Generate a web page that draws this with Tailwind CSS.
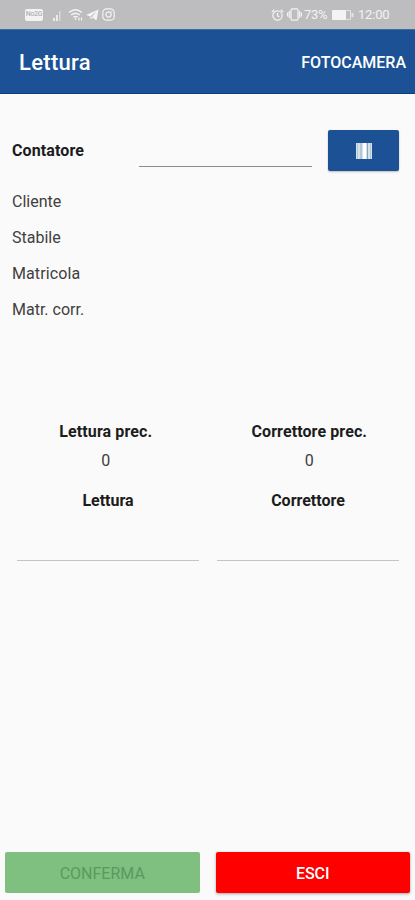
<!DOCTYPE html>
<html lang="it">
<head>
    <meta charset="UTF-8">
    <meta name="viewport" content="width=device-width, initial-scale=1.0">
    <script src="https://cdn.jsdelivr.net/npm/@tailwindcss/browser@4"></script>
    <title>Lettura</title>
</head>
<body class="bg-[#fafafa] font-['Roboto',sans-serif] text-base text-[#404040]">
    <div class="flex h-[900px] w-[415px] flex-col overflow-hidden">
        <!-- Status bar -->
        <div class="flex h-[29px] shrink-0 items-center justify-between bg-[#bdbdbf] px-[25px] text-[#f3f3f3]">
            <div class="flex items-center">
                <span class="flex h-[12px] w-[18px] items-center justify-center rounded-[2px] bg-[#f3f3f3] text-[7px] font-medium tracking-tighter text-[#b0b0b2]">No2G</span>
                <svg class="ml-[9px] h-[12px] w-[10px]" viewBox="0 0 10 12" fill="currentColor">
                    <path d="M1 9h2v3H1zM4 6h2v6H4z" opacity=".85"/>
                    <path d="M7 2h1.5v10H7z" opacity=".5"/>
                </svg>
                <svg class="ml-[6px] h-[13px] w-[16px]" viewBox="0 0 16 13" fill="none" stroke="currentColor" stroke-width="1.4">
                    <path d="M1 4.5Q7.5-1 14 4.5M3.2 7Q7.5 3.4 11.8 7M5.4 9.3Q7.5 7.5 9.6 9.3"/>
                    <path d="M7.5 10v2M11 9.5v3M13.5 9.5v3" stroke-width="1.2"/>
                </svg>
                <svg class="ml-[2px] h-[12px] w-[13px]" viewBox="0 0 13 12" fill="currentColor">
                    <path d="M0 6 12.5.5 10.5 11.5 6.5 8.5 4.8 10.5 4.2 7.5z"/>
                    <path d="M4.3 7.5 10.5 2.5 5.8 8.2z" fill="#bdbdbf"/>
                </svg>
                <svg class="ml-[3px] h-[13px] w-[13px]" viewBox="0 0 13 13" fill="none" stroke="currentColor" stroke-width="1.2">
                    <rect x=".8" y=".8" width="11.4" height="11.4" rx="3.8"/>
                    <circle cx="6.5" cy="6.5" r="2.6"/>
                    <path d="M9.2 3.5h1"/>
                </svg>
            </div>
            <div class="flex items-center text-[13px] leading-none">
                <svg class="h-[12px] w-[13px]" viewBox="0 0 13 12" fill="none" stroke="currentColor" stroke-width="1.2">
                    <circle cx="6.5" cy="6.5" r="4.6"/>
                    <path d="M6.5 4v2.8l2 1M.8 3 3.3.8M12.2 3 9.7.8"/>
                </svg>
                <svg class="ml-[3px] h-[13px] w-[15px]" viewBox="0 0 15 13" fill="none" stroke="currentColor" stroke-width="1.2">
                    <rect x="4" y=".8" width="7" height="11.4" rx="1.2"/>
                    <path d="M2.3 3v7M.6 4.5v4M12.7 3v7M14.4 4.5v4"/>
                </svg>
                <span class="ml-[2px] w-[25px] tracking-[-0.3px]">73%</span>
                <svg class="ml-[3px] h-[10px] w-[22px]" viewBox="0 0 22 10" fill="currentColor">
                    <rect x="0" y="0" width="14" height="10" rx="1"/>
                    <path d="M14 .6h4.5v8.8H14" fill="none" stroke="currentColor" opacity=".7"/>
                    <path d="M19.5 3h2v4h-2z" opacity=".7"/>
                </svg>
                <span class="ml-[4px] w-[32px] tracking-[-0.2px]">12:00</span>
            </div>
        </div>

        <!-- App bar -->
        <header class="flex h-[65px] shrink-0 items-center justify-between border-t border-b border-t-[#3a6c9c] border-b-[#0d3f80] bg-[#1c5295] pt-[2px] pr-[9px] pl-[19px] text-white">
            <h1 class="text-[22px] font-medium tracking-[0.3px]">Lettura</h1>
            <button class="text-[16px] font-medium">FOTOCAMERA</button>
        </header>

        <!-- Meter details -->
        <section class="px-3 pt-9">
            <div class="flex h-[41px] items-center">
                <label for="contatore" class="w-[127px] pt-px font-bold tracking-[0.1px] text-[#1c1c1c]">Contatore</label>
                <input id="contatore" class="h-[33px] w-[173px] border-b border-[#8c8c8c] outline-none">
                <button class="ml-4 flex h-[41px] w-[71px] items-center justify-center rounded-[2px] bg-[#1c5295] shadow-[0_1px_2px_rgba(0,0,0,0.25)]">
                    <svg class="h-4 w-4" viewBox="0 0 16 16">
                        <path fill="#d5e2ea" d="M0 0h16v16H0z"/>
                        <path fill="#b3c8d6" d="M1 0h1v16H1zM4 0h2v16H4zM14 0h1v16h-1z"/>
                        <path fill="#83a5bf" d="M11 0h1v16h-1z"/>
                        <path fill="#fff" d="M7 0h3v16H7z"/>
                    </svg>
                </button>
            </div>
            <dl class="mt-[13px] leading-9">
                <dt>Cliente</dt>
                <dt>Stabile</dt>
                <dt class="tracking-[0.1px]">Matricola</dt>
                <dt>Matr. corr.</dt>
            </dl>
        </section>

        <!-- Readings -->
        <section class="mt-[92px] text-center">
            <div class="grid grid-cols-2 px-1">
                <div>
                    <h2 class="font-bold tracking-[0.1px] text-[#1c1c1c]">Lettura prec.</h2>
                    <p class="mt-[5px]">0</p>
                </div>
                <div>
                    <h2 class="font-bold tracking-[0.1px] text-[#1c1c1c]">Correttore prec.</h2>
                    <p class="mt-[5px]">0</p>
                </div>
            </div>
            <div class="mt-4 grid w-[416px] grid-cols-2 px-2">
                <div class="px-[9px]">
                    <label for="lettura" class="block font-bold text-[#1c1c1c]">Lettura</label>
                    <input id="lettura" class="mt-3 block h-9 w-full border-b border-[#c4c4c4] outline-none">
                </div>
                <div class="px-[9px]">
                    <label for="correttore" class="block font-bold text-[#1c1c1c]">Correttore</label>
                    <input id="correttore" class="mt-3 block h-9 w-full border-b border-[#c4c4c4] outline-none">
                </div>
            </div>
        </section>

        <!-- Actions -->
        <footer class="mt-auto grid grid-cols-2 gap-4 px-[5px] pb-[7px]">
            <button disabled class="h-[41px] rounded-[2px] bg-[#7fbf80] pt-[2px] text-[#5a9a5d]">CONFERMA</button>
            <button class="h-[41px] rounded-[2px] bg-[#ff0000] pt-[2px] font-medium text-white shadow-[0_1px_3px_rgba(0,0,0,0.35)]">ESCI</button>
        </footer>
    </div>
</body>
</html>
